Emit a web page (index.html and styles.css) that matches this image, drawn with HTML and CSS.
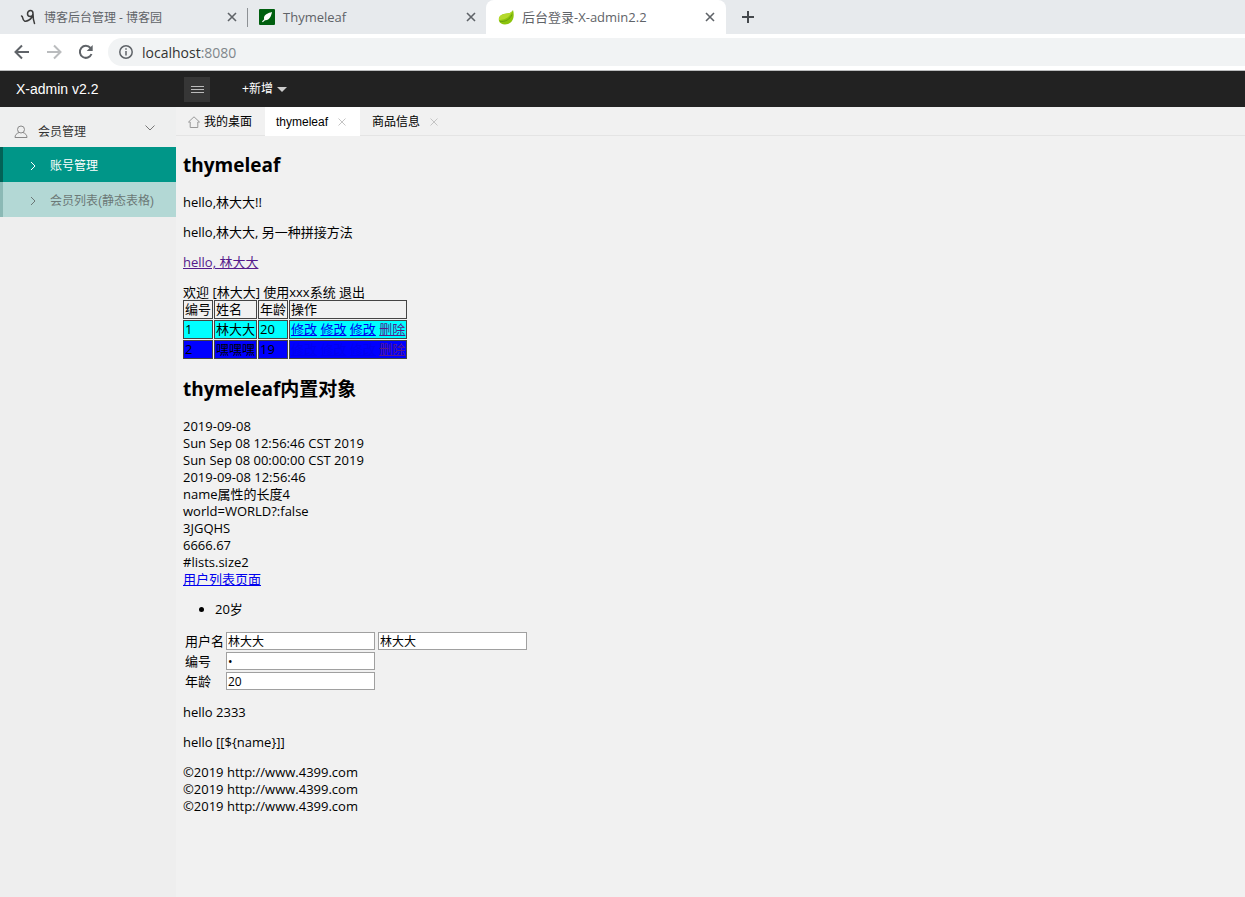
FILE: index.html
```html
<!DOCTYPE html>
<html lang="zh-CN">
<head>
<meta charset="utf-8">
<title>后台登录-X-admin2.2</title>
<link rel="stylesheet" href="styles.css">
</head>
<body>
<div class="browser">
  <div class="strip">
    <div class="tab tab-first">
      <svg class="fav" viewBox="0 0 16 16" fill="none" stroke="#3c3c3c" stroke-width="1.5" stroke-linecap="round" stroke-linejoin="round"><path d="M1.500 7c2 .5.500 4 3 5 2.500.8 6-1.500 7.500-4M13 4.500c0 2-1.200 3-2.800 3S7.500 6.300 7.500 4.800 8.700 1.500 10.500 1.500 13 3 13 4.500c0 4 .3 7 1.500 10"/></svg>
      <span class="tab-title">博客后台管理 - 博客园</span>
      <button class="close" aria-label="关闭"><svg viewBox="0 0 10 10"><path d="M1 1l8 8M9 1L1 9"/></svg></button>
    </div>
    <div class="tab tab-second">
      <svg class="fav" viewBox="0 0 16 16"><rect width="16" height="16" rx="1" fill="#005f0f"/><path d="M13 3C9 4 5.500 5.500 5 8.500c-.1.800 0 1.300.2 1.800L3 12.500l.8.800L6 11.200C10 11.800 12 8 13 3z" fill="#fff"/></svg>
      <span class="tab-title">Thymeleaf</span>
      <button class="close" aria-label="关闭"><svg viewBox="0 0 10 10"><path d="M1 1l8 8M9 1L1 9"/></svg></button>
    </div>
    <div class="tab tab-active">
      <svg class="fav" viewBox="0 0 16 16"><path d="M15 1c1.500 5 1 12-5 14-4 1.200-8 0-9-3C0 7 4 5 9 4.500c3-.3 5-1.500 6-3.500z" fill="#8cc40c"/><path d="M15 1c-1 2-3 3.200-6 3.500C4 5 0 7 1 11c4 0 10-1 14-10z" fill="#b5d92c"/><path d="M2 12.500c5 .5 10-2 12-7" fill="none" stroke="#6ba010" stroke-width="1"/></svg>
      <span class="tab-title">后台登录-X-admin2.2</span>
      <button class="close" aria-label="关闭"><svg viewBox="0 0 10 10"><path d="M1 1l8 8M9 1L1 9"/></svg></button>
    </div>
    <button class="new-tab" aria-label="新标签页"><svg viewBox="0 0 12 12"><path d="M6 0v12M0 6h12"/></svg></button>
  </div>
  <div class="toolbar">
    <button class="nav-btn" aria-label="后退"><svg viewBox="0 0 16 16"><path d="M15 8H2M8 1.500L1.500 8 8 14.500"/></svg></button>
    <button class="nav-btn nav-off" aria-label="前进"><svg viewBox="0 0 16 16"><path d="M1 8h13M8 1.500L14.500 8 8 14.500"/></svg></button>
    <button class="nav-btn" aria-label="刷新"><svg viewBox="0 0 16 16"><path d="M13.500 10A6 6 0 1 1 12.500 4"/><path d="M14.700 1v6h-6z" fill="#5f6368" stroke="none"/></svg></button>
    <div class="address">
      <svg class="info" viewBox="0 0 14 14"><circle cx="7" cy="7" r="6.200" /><path d="M7 6v4.500M7 3.300v1.500"/></svg>
      <span>localhost<span class="port">:8080</span></span>
    </div>
  </div>
</div>
<header class="header">
  <a class="logo" href="#">X-admin v2.2</a>
  <button class="menu" aria-label="菜单"><svg viewBox="0 0 13 7"><path d="M0 .5h13M0 3.500h13M0 6.500h13"/></svg></button>
  <button class="add">+新增<span class="caret"></span></button>
</header>
<div class="main">
  <nav class="side">
    <a class="group" href="#">
      <svg class="user" viewBox="0 0 14 14"><circle cx="7" cy="4.500" r="3.500"/><path d="M5 7.500C2.500 8.500 1 10 1 12.500h12c0-2.500-1.500-4-4-5"/></svg>
      <span class="grow">会员管理</span>
      <svg class="down" viewBox="0 0 10 6"><path d="M.5.5L5 5 9.500.5"/></svg>
    </a>
    <a class="item item-on" href="#"><svg class="right" viewBox="0 0 6 10"><path d="M1 1l4 4-4 4"/></svg>账号管理</a>
    <a class="item" href="#"><svg class="right" viewBox="0 0 6 10"><path d="M1 1l4 4-4 4"/></svg>会员列表(静态表格)</a>
  </nav>
  <div class="pane">
    <div class="page-tabs">
      <a class="ptab" href="#"><svg class="home" viewBox="0 0 12 12"><path d="M.5 6L6 .8 11.500 6H9.800v5.500H2.200V6z"/></svg>我的桌面</a>
      <a class="ptab ptab-on" href="#">thymeleaf<svg class="x" viewBox="0 0 8 8"><path d="M.5.5l7 7M7.500.5l-7 7"/></svg></a>
      <a class="ptab" href="#">商品信息<svg class="x" viewBox="0 0 8 8"><path d="M.5.5l7 7M7.500.5l-7 7"/></svg></a>
    </div>
    <main class="content">
      <h2>thymeleaf</h2>
      <p>hello,林大大!!</p>
      <p>hello,林大大, 另一种拼接方法</p>
      <p><a class="visited" href="#">hello, 林大大</a></p>
      <div>欢迎 [林大大] 使用xxx系统 退出</div>
      <table class="grid">
        <tr><td>编号</td><td>姓名</td><td>年龄</td><td>操作</td></tr>
        <tr class="cyan"><td>1</td><td>林大大</td><td>20</td><td><a href="#">修改</a> <a href="#">修改</a> <a href="#">修改</a> <a class="visited" href="#">删除</a></td></tr>
        <tr class="blue"><td>2</td><td>嘿嘿嘿</td><td>19</td><td><a href="#">修改</a> <a href="#">修改</a> <a href="#">修改</a> <a class="visited" href="#">删除</a></td></tr>
      </table>
      <h2>thymeleaf内置对象</h2>
      <div>2019-09-08</div>
      <div>Sun Sep 08 12:56:46 CST 2019</div>
      <div>Sun Sep 08 00:00:00 CST 2019</div>
      <div>2019-09-08 12:56:46</div>
      <div>name属性的长度4</div>
      <div>world=WORLD?:false</div>
      <div>3JGQHS</div>
      <div>6666.67</div>
      <div>#lists.size2</div>
      <div><a href="#">用户列表页面</a></div>
      <ul><li>20岁</li></ul>
      <form class="form">
        <label for="name">用户名</label><div class="fields"><input id="name" type="text" value="林大大"><input type="text" aria-label="用户名" value="林大大"></div>
        <label for="no">编号</label><div class="fields"><input id="no" type="password" value="1"></div>
        <label for="age">年龄</label><div class="fields"><input id="age" type="text" value="20"></div>
      </form>
      <p>hello 2333</p>
      <p>hello [[${name}]]</p>
      <div>©2019 http://www.4399.com</div>
      <div>©2019 http://www.4399.com</div>
      <div>©2019 http://www.4399.com</div>
    </main>
  </div>
</div>
</body>
</html>
```
FILE: styles.css
```css
* { box-sizing: border-box; }
body {
  margin: 0;
  min-height: 100vh;
  display: flex;
  flex-direction: column;
  background: #f1f1f1;
  color: #000;
  font: 13px/17px "Open Sans", "Noto Sans CJK SC", sans-serif;
}
button { border: 0; padding: 0; background: none; font: inherit; color: inherit; }
svg { display: block; flex: none; fill: none; }

.strip { display: flex; height: 34px; background: #e7eaed; color: #5f6368; }
.tab { display: flex; align-items: center; width: 239px; padding: 0 10px 0 12px; }
.tab-first { width: 248px; padding-left: 20px; position: relative; font-size: 12px; }
.tab-first::after { content: ""; position: absolute; right: 0; top: 8px; height: 19px; width: 1px; background: #8d9195; }
.tab-second { width: 238px; padding: 0 9px 0 11px; }
.tab-active { width: 240px; background: #fff; border-radius: 8px 8px 0 0; }
.fav { width: 16px; height: 16px; margin-right: 8px; }
.tab-title { flex: 1; }
.close svg { width: 10px; height: 10px; margin: 1px; stroke: #5f6368; stroke-width: 1.6; }
.new-tab { padding: 0 16px; }
.new-tab svg { width: 12px; height: 12px; stroke: #45494d; stroke-width: 2; }

.toolbar { display: flex; align-items: center; gap: 16px; height: 37px; padding-left: 14px; background: #fff; border-bottom: 1px solid #bbbdbe; }
.nav-btn svg { width: 16px; height: 16px; stroke: #5f6368; stroke-width: 2; }
.nav-off svg { stroke: #babcbe; }
.address { flex: 1; display: flex; align-items: center; gap: 9px; height: 28px; margin-left: -2px; padding-left: 11px; background: #f1f3f4; border-radius: 14px 0 0 14px; color: #333; font-size: 14px; }
.port { color: #80868b; }
.info { width: 14px; height: 14px; stroke: #5f6368; stroke-width: 1.5; }

.header { display: flex; align-items: center; height: 36px; background: #222; color: #fff; }
.logo { width: 184px; padding-left: 16px; color: #fff; text-decoration: none; font: 14px/20px "Liberation Sans", sans-serif; }
.menu { display: grid; place-items: center; width: 26px; height: 25px; background: #363636; }
.menu svg { width: 13px; height: 7px; stroke: #bbb; }
.add { display: flex; align-items: center; gap: 4px; margin-left: 32px; font: 12px/18px "Liberation Sans", "Noto Sans CJK SC", sans-serif; }
.caret { border: 5px solid transparent; border-top-color: #ccc; border-bottom: 0; }

.main { flex: 1; display: flex; }
.side { width: 176px; background: #eee; font: 12px/18px "Liberation Sans", "Noto Sans CJK SC", sans-serif; }
.side a { display: flex; align-items: center; text-decoration: none; }
.side .group { height: 40px; padding: 9px 21px 0 14px; background: #eeefef; color: #333; gap: 10px; }
.grow { flex: 1; }
.user { width: 14px; height: 14px; stroke: #888; }
.down { width: 10px; height: 6px; margin-bottom: 8px; stroke: #777; }
.side .item { height: 35px; padding: 2px 0 0 27px; gap: 14px; background: #b3d8d5; border-left: 3px solid #8bb9b5; color: #6c7877; }
.side .item-on { background: #009688; border-color: #036257; color: #fff; }
.right { width: 6px; height: 10px; stroke: currentColor; }

.pane { flex: 1; min-width: 0; }
.page-tabs { display: flex; height: 29px; border-bottom: 1px solid #e4e4e4; font: 12px/28px "Liberation Sans", "Noto Sans CJK SC", sans-serif; }
.ptab { display: flex; align-items: center; height: 29px; padding: 0 14px 0 12px; color: #000; text-decoration: none; }
.ptab:first-child { padding-right: 13px; }
.ptab-on { background: #fff; padding-left: 11px; }
.home { width: 12px; height: 12px; margin-right: 4px; stroke: #999; }
.x { width: 8px; height: 8px; margin-left: 10px; stroke: #c4c4c4; }

.content { padding: 0 7px; }
h2 { margin: 16px 0; font-size: 19px; line-height: 26px; }
p { margin: 13px 0; }
.content a { color: #00e; }
.content a.visited { color: #551a8b; }
.grid { border-collapse: separate; border-spacing: 1px; margin: -2px 0 0 -1px; }
.grid td { height: 19px; padding: 0 1px; border: 1px solid #444; }
.grid .cyan { background: #0ff; }
.grid .blue { background: #00f; }
ul { margin: 13px 0; padding-left: 32px; }
.form { display: grid; grid-template-columns: 39px 1fr; gap: 2px; margin: 14px 0; padding-left: 2px; align-items: center; }
.form label { white-space: nowrap; }
.fields { display: flex; gap: 3px; }
.fields input { width: 149px; height: 18px; padding: 1px; border: 1px solid #a0a0a0; background: #fff; font: 12px/14px "Open Sans", "Noto Sans CJK SC", sans-serif; }
```
